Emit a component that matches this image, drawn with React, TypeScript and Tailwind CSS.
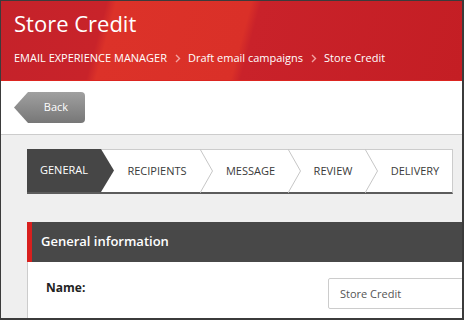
import React from "react";

const steps = [
  { label: "GENERAL", width: "w-[74px]" },
  { label: "RECIPIENTS", width: "w-[99px]" },
  { label: "MESSAGE", width: "w-[88px]" },
  { label: "REVIEW", width: "w-[77px]" },
  { label: "DELIVERY", width: "flex-1" },
];

function Crumb({ children }: { children: React.ReactNode }) {
  return <span className="text-white">{children}</span>;
}

function Sep() {
  return (
    <svg width="6" height="9" viewBox="0 0 6 9" className="ml-[8px] mr-[7px] shrink-0">
      <path d="M1 1l3.5 3.5L1 8" fill="none" stroke="#f2a3a3" strokeWidth="1.4" />
    </svg>
  );
}

export default function App() {
  return (
    <div className="w-[464px] h-[320px] overflow-hidden flex flex-col border-t border-l border-r-2 border-b-2 border-[#3b3b3b] font-['Open_Sans',sans-serif]">
      <div className="h-[80px] shrink-0 border-b border-[#dc2520] pl-[13px] pt-[6px] bg-[linear-gradient(105deg,#c5222a_0%,#c8232a_22%,#dc3229_24%,#da3028_52%,#c9222a_54%,#c41e24_100%)]">
        <h1 className="text-[22px] leading-[32px] text-white">Store Credit</h1>
        <div className="mt-[11px] flex items-center text-[11px] leading-[16px]">
          <Crumb>EMAIL EXPERIENCE MANAGER</Crumb>
          <Sep />
          <Crumb>Draft email campaigns</Crumb>
          <Sep />
          <Crumb>Store Credit</Crumb>
        </div>
      </div>

      <div className="h-[54px] shrink-0 bg-white border-b border-[#cccccc] pl-[13px] pt-[11px]">
        <button className="h-[31px] w-[71px] pl-[13px] rounded-r-[4px] flex items-center justify-center text-[11px] text-white bg-[linear-gradient(#a0a0a0,#777777)] [clip-path:polygon(14px_0,100%_0,100%_100%,14px_100%,0_50%)]">
          Back
        </button>
      </div>

      <div className="flex-1 bg-[#efefef] pl-[26px] pt-[14px] overflow-hidden">
        <div className="w-[426px] h-[45px] flex bg-white border-b-2 border-[#5c5c5c] border-r border-r-[#cccccc]">
          {steps.map((s, i) => (
            <div
              key={s.label}
              className={
                "relative h-full flex items-center justify-center text-[11px] " +
                s.width +
                (i === 0
                  ? " bg-[#464646] text-white z-10"
                  : " border-t border-[#cccccc] text-[#3a3a3a] pl-[13px]")
              }
            >
              {s.label}
              {i === 0 ? (
                <svg className="absolute left-full top-0 h-full" width="13" viewBox="0 0 13 45" preserveAspectRatio="none">
                  <polygon points="0,0 13,22.5 0,45" fill="#464646" />
                </svg>
              ) : (
                i < steps.length - 1 && (
                  <svg className="absolute left-full -top-px h-[44px] z-10" width="14" viewBox="0 0 14 44" preserveAspectRatio="none">
                    <polyline points="0,0 12.5,22 0,44" fill="none" stroke="#c6c6c6" strokeWidth="1" />
                  </svg>
                )
              )}
            </div>
          ))}
        </div>

        <div className="mt-[28px] w-[440px]">
          <div className="h-[40px] flex items-center bg-[#484848] border-l-[5px] border-[#d8201e] pl-[9px]">
            <span className="text-[13px] font-semibold text-white">General information</span>
          </div>
          <div className="bg-white border-l border-[#cccccc] pl-[18px] pt-[16px] pb-[12px] flex items-start">
            <label className="w-[282px] mt-[2px] text-[12px] leading-[16px] font-bold text-[#222]">Name:</label>
            <div className="flex-1 h-[31px] border border-[#cccccc] rounded-[2px] px-[11px] text-[11px] leading-[29px] text-[#555]">
              Store Credit
            </div>
          </div>
        </div>
      </div>
    </div>
  );
}
